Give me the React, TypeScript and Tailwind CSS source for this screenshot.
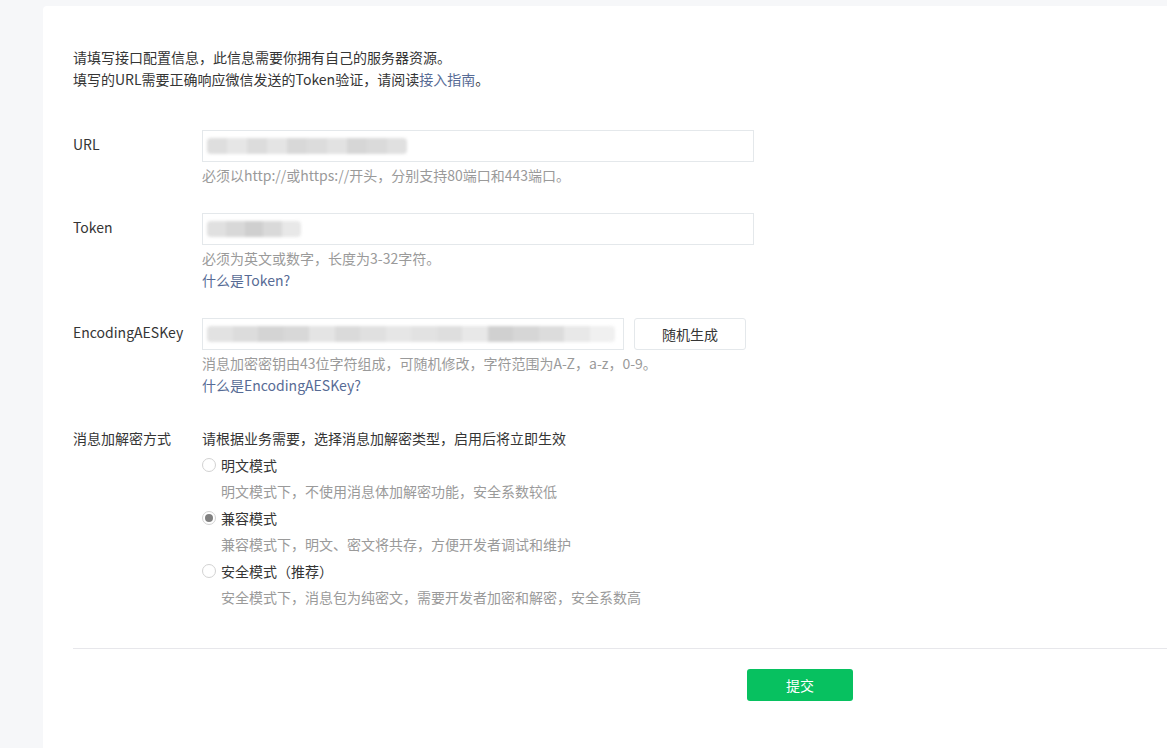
import React, { ReactElement } from 'react'

const Blur: React.FC<{ blocks: string[]; w: number }> = ({ blocks, w }): ReactElement => (
  <div className="flex h-[16px] blur-[1.5px] overflow-hidden rounded-sm" style={{ width: w }}>
    {blocks.map((c, i) => (
      <div key={i} className="flex-1 h-full" style={{ background: c }} />
    ))}
  </div>
)

const Radio: React.FC<{ checked?: boolean; label: string; desc: string }> = ({ checked, label, desc }): ReactElement => (
  <div>
    <label className="flex items-center mt-[5px] leading-[22px] text-[#353535]">
      <span className="w-[14px] h-[14px] rounded-full border border-[#d2d2d2] bg-white flex items-center justify-center mr-[5px]">
        {checked && <span className="w-[8px] h-[8px] rounded-full bg-[#808080]" />}
      </span>
      {label}
    </label>
    <div className="pl-[19px] mt-[4px] leading-[22px] text-[#9a9a9a]">{desc}</div>
  </div>
)

const App: React.FC = (): ReactElement => (
  <div className="w-[1167px] h-[748px] overflow-hidden bg-[#f6f7f9] pl-[43px] pt-[6px] font-['Microsoft_YaHei','Noto_Sans_CJK_SC',sans-serif] text-[14px]">
    <div className="w-[1200px] h-[800px] bg-white rounded-tl-[4px] px-[30px] pt-[40px]">
      <div className="leading-[22px] text-[#353535]">
        <p>请填写接口配置信息，此信息需要你拥有自己的服务器资源。</p>
        <p>
          填写的URL需要正确响应微信发送的Token验证，请阅读<a className="text-[#576b95]">接入指南</a>。
        </p>
      </div>

      <div className="mt-[40px] flex">
        <div className="w-[129px] text-[#353535] leading-[28px]">URL</div>
        <div>
          <div className="w-[552px] h-[32px] border border-[#e4e8eb] flex items-center px-[4px]">
            <Blur w={200} blocks={['#dedede', '#e6e6e6', '#dcdcdc', '#e4e4e4', '#d8d8d8', '#dcdcdc', '#e2e2e2', '#d6d6d6', '#dadada', '#e0e0e0']} />
          </div>
          <div className="mt-[2px] leading-[22px] text-[#9a9a9a]">必须以http://或https://开头，分别支持80端口和443端口。</div>
        </div>
      </div>

      <div className="mt-[27px] flex">
        <div className="w-[129px] text-[#353535] leading-[28px]">Token</div>
        <div>
          <div className="w-[552px] h-[32px] border border-[#e4e8eb] flex items-center px-[4px]">
            <Blur w={94} blocks={['#e0e0e0', '#d8d8d8', '#cfcfcf', '#d9d9d9', '#e8e8e8']} />
          </div>
          <div className="mt-[2px] leading-[22px] text-[#9a9a9a]">必须为英文或数字，长度为3-32字符。</div>
          <a className="block leading-[22px] text-[#576b95]">什么是Token?</a>
        </div>
      </div>

      <div className="mt-[27px] flex">
        <div className="w-[129px] text-[#353535] leading-[28px]">EncodingAESKey</div>
        <div>
          <div className="flex">
            <div className="w-[422px] h-[32px] border border-[#e4e8eb] flex items-center px-[4px]">
              <Blur w={408} blocks={['#e2e2e2', '#dcdcdc', '#d4d4d4', '#d8d8d8', '#e4e4e4', '#dadada', '#e0e0e0', '#e6e6e6', '#e2e2e2', '#dedede', '#e8e8e8', '#d0d0d0', '#d6d6d6', '#dcdcdc', '#e8e8e8', '#f0f0f0']} />
            </div>
            <button className="ml-[10px] w-[112px] h-[32px] border border-[#e4e8eb] rounded-[3px] bg-white text-[#353535]">随机生成</button>
          </div>
          <div className="mt-[2px] leading-[22px] text-[#9a9a9a]">消息加密密钥由43位字符组成，可随机修改，字符范围为A-Z，a-z，0-9。</div>
          <a className="block leading-[22px] text-[#576b95]">什么是EncodingAESKey?</a>
        </div>
      </div>

      <div className="mt-[31px] flex">
        <div className="w-[129px] text-[#353535] leading-[22px]">消息加解密方式</div>
        <div>
          <div className="leading-[22px] text-[#353535]">请根据业务需要，选择消息加解密类型，启用后将立即生效</div>
          <Radio label="明文模式" desc="明文模式下，不使用消息体加解密功能，安全系数较低" />
          <Radio checked label="兼容模式" desc="兼容模式下，明文、密文将共存，方便开发者调试和维护" />
          <Radio label="安全模式（推荐）" desc="安全模式下，消息包为纯密文，需要开发者加密和解密，安全系数高" />
        </div>
      </div>

      <div className="mt-[40px] border-t border-[#e7e7eb]" />
      <div className="pt-[20px] pl-[674px]">
        <button className="w-[106px] h-[32px] rounded-[3px] bg-[#07c160] text-white">提交</button>
      </div>
    </div>
  </div>
)

export default App
